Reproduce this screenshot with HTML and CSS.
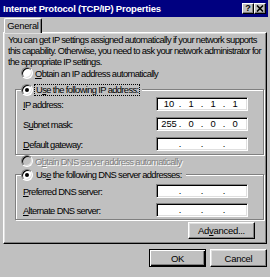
FILE: index.html
```html
<!DOCTYPE html>
<html lang="en">
<head>
  <meta charset="UTF-8" />
  <title>Internet Protocol (TCP/IP) Properties</title>
  <link rel="stylesheet" href="styles.css">
</head>
<body>

<div class="window">
  <div class="titlebar">
    <span class="title">Internet Protocol (TCP/IP) Properties</span>
    <div class="caption-buttons">
      <span class="cbtn help">?</span>
      <span class="cbtn close">
        <svg width="8" height="7" viewBox="0 0 8 7"><path d="M1 0.5 L7 6.5 M7 0.5 L1 6.5" stroke="#000" stroke-width="1.6"/></svg>
      </span>
    </div>
  </div>

  <div class="client">
    <div class="tabs">
      <div class="tab">General</div>
    </div>

    <div class="panel">
      <p class="intro">You can get IP settings assigned automatically if your network supports<br>this capability. Otherwise, you need to ask your network administrator for<br>the appropriate IP settings.</p>

      <div class="radio-row">
        <span class="radio"></span>
        <span class="label"><u>O</u>btain an IP address automatically</span>
      </div>

      <div class="group group-ip">
        <div class="legend">
          <span class="radio checked"></span>
          <span class="label focus">U<u>s</u>e the following IP address:</span>
        </div>
        <div class="field-row">
          <span><u>I</u>P address:</span>
          <div class="ip"><span class="oct">10</span><span class="dot">.</span><span class="oct">1</span><span class="dot">.</span><span class="oct">1</span><span class="dot">.</span><span class="oct">1</span></div>
        </div>
        <div class="field-row">
          <span>S<u>u</u>bnet mask:</span>
          <div class="ip"><span class="oct">255</span><span class="dot">.</span><span class="oct">0</span><span class="dot">.</span><span class="oct">0</span><span class="dot">.</span><span class="oct">0</span></div>
        </div>
        <div class="field-row">
          <span><u>D</u>efault gateway:</span>
          <div class="ip"><span class="oct"></span><span class="dot">.</span><span class="oct"></span><span class="dot">.</span><span class="oct"></span><span class="dot">.</span><span class="oct"></span></div>
        </div>
      </div>

      <div class="radio-row disabled">
        <span class="radio"></span>
        <span class="label">O<u>b</u>tain DNS server address automatically</span>
      </div>

      <div class="group group-dns">
        <div class="legend">
          <span class="radio checked"></span>
          <span class="label">Us<u>e</u> the following DNS server addresses:</span>
        </div>
        <div class="field-row">
          <span><u>P</u>referred DNS server:</span>
          <div class="ip"><span class="oct"></span><span class="dot">.</span><span class="oct"></span><span class="dot">.</span><span class="oct"></span><span class="dot">.</span><span class="oct"></span></div>
        </div>
        <div class="field-row">
          <span><u>A</u>lternate DNS server:</span>
          <div class="ip"><span class="oct"></span><span class="dot">.</span><span class="oct"></span><span class="dot">.</span><span class="oct"></span><span class="dot">.</span><span class="oct"></span></div>
        </div>
      </div>

      <div class="advanced-row">
        <button class="btn advanced">Ad<u>v</u>anced...</button>
      </div>
    </div>

    <div class="actions">
      <button class="btn default">OK</button>
      <button class="btn">Cancel</button>
    </div>
  </div>
</div>

</body>
</html>
```

FILE: styles.css
```css
body {
  margin: 0;
  font-family: "Liberation Sans", Arial, sans-serif;
  font-size: 9.4px;
  letter-spacing: -0.65px;
  color: #000;
  background: #c0c0c0;
}
.window {
  width: 270px;
  height: 277px;
  background: #c0c0c0;
  display: flex;
  flex-direction: column;
}
.titlebar {
  height: 17px;
  margin-right: 2px;
  padding: 0 2px 0 3px;
  background: #000080;
  display: flex;
  align-items: center;
  justify-content: space-between;
}
.title {
  color: #fff;
  font-weight: 700;
  font-size: 9.5px;
  letter-spacing: -0.2px;
}
.caption-buttons {
  display: flex;
}
.cbtn {
  width: 12px;
  height: 11px;
  box-sizing: border-box;
  background: #c0c0c0;
  border: 1px solid;
  border-color: #fff #000 #000 #fff;
  box-shadow: inset -1px -1px 0 #808080;
  display: flex;
  align-items: center;
  justify-content: center;
  font-weight: 700;
  font-size: 9px;
  letter-spacing: 0;
  line-height: 1;
}
.client {
  padding: 1px 3px 0 3px;
  display: flex;
  flex-direction: column;
}
.tabs {
  display: flex;
  padding-left: 1px;
}
.tab {
  position: relative;
  width: 38px;
  height: 15px;
  margin-bottom: -1px;
  box-sizing: border-box;
  background: #c0c0c0;
  border-top: 1px solid #fff;
  border-left: 1px solid #fff;
  border-right: 1px solid #000;
  border-radius: 2px 2px 0 0;
  box-shadow: inset -1px 0 0 #808080;
  text-align: center;
  line-height: 13px;
  letter-spacing: -0.3px;
}
.panel {
  padding: 1px 2px 4px 4px;
  border: 1px solid;
  border-color: #fff #000 #000 #fff;
  box-shadow: inset -1px -1px 0 #808080, inset 1px 1px 0 #dfdfdf;
}
.intro {
  margin: 0;
  line-height: 11px;
  white-space: nowrap;
}
.radio-row {
  height: 12px;
  padding-left: 13px;
  display: flex;
  align-items: center;
  gap: 2px;
}
.radio {
  position: relative;
  flex: none;
  width: 12px;
  height: 12px;
  box-sizing: border-box;
  border-radius: 50%;
  background: #fff;
  border: 1px solid;
  border-color: #808080 #fff #fff #808080;
  box-shadow: inset 1px 1px 0 #000, inset -1px -1px 0 #dfdfdf;
}
.radio.checked::after {
  content: "";
  position: absolute;
  left: 3px;
  top: 3px;
  width: 4px;
  height: 4px;
  border-radius: 50%;
  background: #000;
}
.disabled .radio {
  background: #c0c0c0;
}
.disabled .label {
  color: #808080;
  text-shadow: 1px 1px 0 #fff;
}
.group {
  margin-left: 7px;
  padding: 0 15px 2px 7px;
  border: 1px solid #808080;
  box-shadow: inset 1px 1px 0 #fff, 1px 1px 0 #fff;
}
.group-ip {
  margin-top: 10px;
  padding-bottom: 3px;
}
.group-dns {
  margin-top: 7px;
}
.legend {
  width: fit-content;
  height: 13px;
  margin: -7px 0 0 -2px;
  padding-right: 2px;
  background: #c0c0c0;
  display: flex;
  align-items: center;
  gap: 1px;
}
.legend .label {
  padding: 0 1px;
  border: 1px dotted transparent;
  line-height: 10px;
}
.legend .focus {
  border-color: #000;
}
.group-ip .legend + .field-row {
  margin-top: 1px;
}
.group-dns .legend + .field-row {
  margin-top: 3px;
}
.field-row {
  height: 14px;
  margin-top: 6px;
  display: flex;
  align-items: center;
  justify-content: space-between;
}
.group-dns .field-row {
  margin-top: 5px;
}
.ip {
  width: 92px;
  height: 14px;
  box-sizing: border-box;
  padding-left: 2px;
  background: #fff;
  border: 1px solid;
  border-color: #808080 #fff #fff #808080;
  box-shadow: inset 1px 1px 0 #000, inset -1px -1px 0 #dfdfdf;
  display: flex;
  align-items: center;
  line-height: 12px;
  letter-spacing: 0;
}
.oct {
  width: 20px;
  text-align: center;
}
.dot {
  width: 2px;
  display: flex;
  justify-content: center;
}
.advanced-row {
  margin-top: 2px;
  padding-right: 9px;
  display: flex;
  justify-content: flex-end;
}
.btn {
  height: 17px;
  padding: 0;
  font-family: inherit;
  font-size: 9.5px;
  letter-spacing: -0.3px;
  color: #000;
  background: #c0c0c0;
  border: 1px solid;
  border-color: #fff #000 #000 #fff;
  box-shadow: inset -1px -1px 0 #808080, inset 1px 1px 0 #dfdfdf;
}
.advanced {
  width: 67px;
}
.actions {
  margin-top: 5px;
  display: flex;
  justify-content: flex-end;
  gap: 4px;
}
.actions .btn {
  width: 57px;
  height: 18px;
}
.actions .default {
  border-color: #000;
  box-shadow: inset 1px 1px 0 #fff, inset -1px -1px 0 #000, inset -2px -2px 0 #808080;
}
```
